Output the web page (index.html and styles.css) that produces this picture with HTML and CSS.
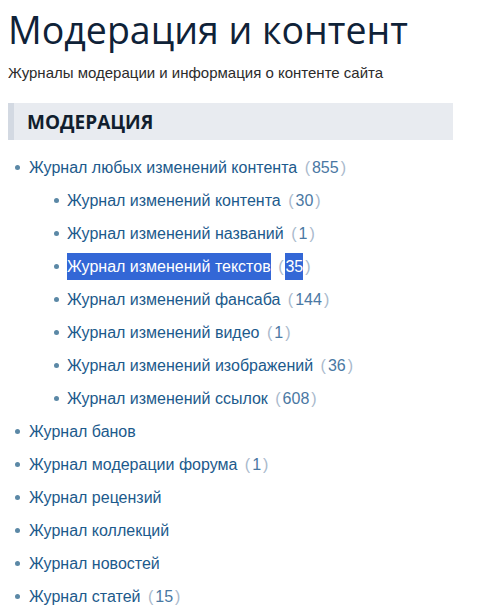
FILE: index.html
```html
<!DOCTYPE html>
<html lang="ru">
<head>
<meta charset="utf-8">
<title>Модерация и контент</title>
<link rel="stylesheet" href="styles.css">
</head>
<body>
<h1 class="title">Модерация и контент</h1>
<p class="subtitle">Журналы модерации и информация о контенте сайта</p>
<h2 class="section">МОДЕРАЦИЯ</h2>
<ul class="list">
  <li><a class="link">Журнал любых изменений контента</a> <span class="count"><span class="paren">(</span>855<span class="paren">)</span></span>
    <ul class="list sub">
      <li><a class="link">Журнал изменений контента</a> <span class="count"><span class="paren">(</span>30<span class="paren">)</span></span></li>
      <li><a class="link">Журнал изменений названий</a> <span class="count"><span class="paren">(</span>1<span class="paren">)</span></span></li>
      <li><a class="link sel">Журнал изменений текстов</a> <span class="count"><span class="paren">(</span><span class="sel">35</span><span class="paren">)</span></span></li>
      <li><a class="link">Журнал изменений фансаба</a> <span class="count"><span class="paren">(</span>144<span class="paren">)</span></span></li>
      <li><a class="link">Журнал изменений видео</a> <span class="count"><span class="paren">(</span>1<span class="paren">)</span></span></li>
      <li><a class="link">Журнал изменений изображений</a> <span class="count"><span class="paren">(</span>36<span class="paren">)</span></span></li>
      <li><a class="link">Журнал изменений ссылок</a> <span class="count"><span class="paren">(</span>608<span class="paren">)</span></span></li>
    </ul>
  </li>
  <li><a class="link">Журнал банов</a></li>
  <li><a class="link">Журнал модерации форума</a> <span class="count"><span class="paren">(</span>1<span class="paren">)</span></span></li>
  <li><a class="link">Журнал рецензий</a></li>
  <li><a class="link">Журнал коллекций</a></li>
  <li><a class="link">Журнал новостей</a></li>
  <li><a class="link">Журнал статей</a> <span class="count"><span class="paren">(</span>15<span class="paren">)</span></span></li>
</ul>
</body>
</html>
```
FILE: styles.css
```css
html, body {
  background: #ffffff;
}
body {
  margin: 8px;
  font-family: "Liberation Sans", Arial, sans-serif;
}
.title {
  margin: 0;
  font-family: "Open Sans", sans-serif;
  font-weight: 400;
  font-size: 37.5px;
  line-height: 44px;
  color: #0f2238;
}
.subtitle {
  margin: 12px 0 0;
  font-size: 15px;
  line-height: 18px;
  color: #2b2b2b;
}
.section {
  margin: 21px 29px 0 0;
  height: 37px;
  box-sizing: border-box;
  padding: 1px 0 0 13px;
  background: #e8ebf0;
  border-left: 6px solid #d3d9e2;
  font-family: "Open Sans", sans-serif;
  font-weight: 700;
  font-size: 19px;
  line-height: 36px;
  color: #111e2e;
}
.list {
  list-style: none;
  margin: 14px 0 0;
  padding: 0;
}
.list.sub {
  margin: 6px 0 0;
  padding-left: 17px;
}
.list li {
  position: relative;
  padding-left: 21px;
  font-size: 16px;
  line-height: 27px;
  margin-bottom: 6px;
}
.list.sub li:last-child {
  margin-bottom: 0;
}
.list li::before {
  content: "";
  position: absolute;
  left: 7px;
  top: 11px;
  width: 5px;
  height: 5px;
  border-radius: 50%;
  background: #5b88a6;
}
.list.sub li::before {
  left: 8px;
}
.link {
  color: #1c5a8c;
  text-decoration: none;
}
.count {
  color: #4a78a3;
  margin-left: 1px;
}
.paren {
  color: #a9b9cc;
  margin: 0 2px;
}
.sel {
  background: #3367d6;
  color: #ffffff;
  padding: 5px 0;
}
```
